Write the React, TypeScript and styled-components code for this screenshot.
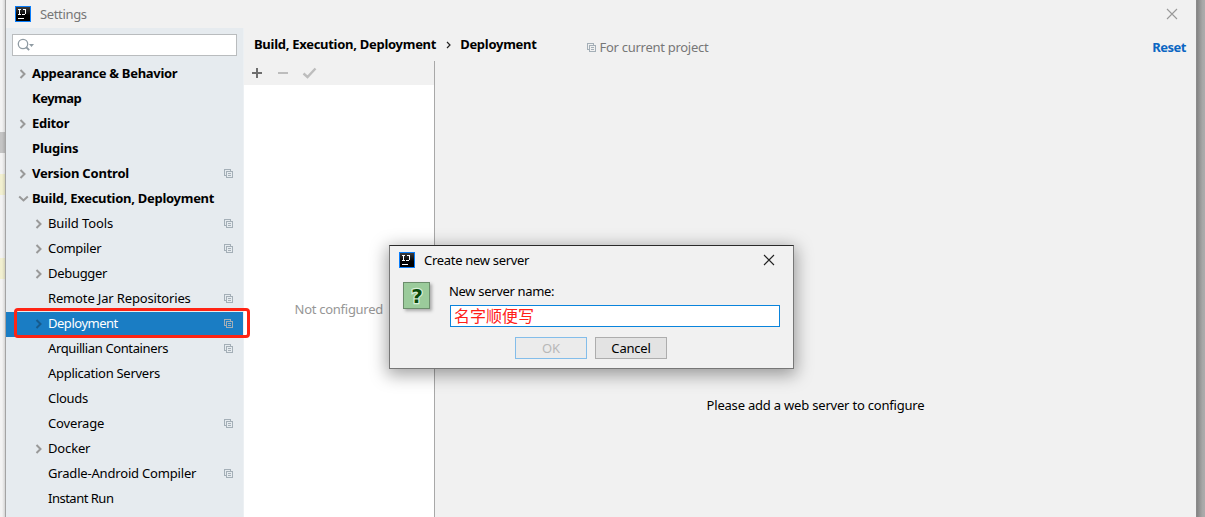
import React from 'react';
import styled, { createGlobalStyle } from 'styled-components';

const Global = createGlobalStyle`
  * { box-sizing: border-box; }
  body {
    margin: 0; overflow: hidden; color: #000;
    font: 13px/25px "Noto Sans", "Noto Sans CJK SC", sans-serif;
  }
`;

const Desktop = styled.div`
  height: 517px; display: grid; grid-template-columns: 5px 1192px 1fr;
  background: #f0f0f0; position: relative; overflow: hidden;
`;
const Backdrop = styled.div`
  display: flex; flex-direction: column;
  box-shadow: inset -4px 0 4px -3px #bbb;
`;
const Stripe = styled.div<{ $h: number; $color: string }>`
  height: ${p => p.$h}px; background: linear-gradient(90deg, transparent 40%, rgba(0,0,0,.12)), ${p => p.$color};
`;
const RightShadow = styled.div`background: linear-gradient(90deg, #848484, #a8a8a8 70%, #acacac);`;
const Window = styled.div`
  display: flex; flex-direction: column; background: #f1f1f1;
  border-left: 1px solid #a3a3a3; border-right: 1px solid #8a8a8a;
`;
const TitleBar = styled.header`
  height: 28px; display: flex; align-items: center; padding: 0 18px 0 9px; color: #777;
`;
const Label = styled.span<{ $ls?: number; $bold?: boolean }>`
  letter-spacing: ${p => p.$ls ?? 0}px; font-weight: ${p => (p.$bold ? 700 : 400)}; white-space: nowrap;
`;
const TitleText = styled(Label)`margin: 0 auto 0 9px;`;
const Columns = styled.div`flex: 1; display: flex; min-height: 0;`;
const Sidebar = styled.nav`
  width: 238px; background: #e6ebef; padding-top: 6px; border-right: 1px solid #ecf0f3;
`;
const Search = styled.div`
  width: 225px; height: 22px; margin: 0 0 6px 6px; border: 1px solid #b9bcbe; background: #fff;
  display: flex; align-items: center; padding-left: 4px;
`;
const Row = styled.div<{ $depth: number; $selected?: boolean }>`
  height: 25px; display: flex; align-items: center; padding: 0 10px 2px ${p => 10 + p.$depth * 16}px;
  background: ${p => (p.$selected ? '#1a7dc4' : 'transparent')};
  color: ${p => (p.$selected ? '#fff' : '#000')};
`;
const ArrowSlot = styled.span`width: 16px; height: 23px; display: flex; align-items: center;`;
const RowText = styled(Label)`margin-right: auto;`;
const Main = styled.main`flex: 1; display: flex; flex-direction: column; min-width: 0;`;
const Crumbs = styled.div`
  height: 33px; display: flex; align-items: center; padding: 0 10px; white-space: nowrap;
`;
const Chevron = styled.span`width: 24px; display: flex; justify-content: center;`;
const Scope = styled.div`
  display: flex; align-items: center; gap: 4px; color: #777; margin: 6px auto 0 50px;
`;
const Reset = styled(Label)`color: #0b66c3; margin-top: 6px;`;
const Panels = styled.div`flex: 1; display: flex; min-height: 0;`;
const ServerPane = styled.section`
  width: 191px; border-right: 1px solid #a8a8a8; display: flex; flex-direction: column;
`;
const Toolbar = styled.div`height: 24px; display: flex; align-items: center;`;
const ServerList = styled.div`
  flex: 1; background: #fff; color: #969696; text-align: right; padding: 212px 51px 0 0;
`;
const Details = styled.section`flex: 1; text-align: center; padding: 332px 0 0 0;`;

const Highlight = styled.div`
  position: absolute; left: 14px; top: 308px; width: 236px; height: 30px;
  border: 3px solid #ff2414; border-radius: 4px;
`;
const Dialog = styled.div`
  position: absolute; left: 389px; top: 245px; width: 405px; height: 124px;
  background: #f1f1f1; border: 1px solid #777; border-top-color: #2a2a2a;
  box-shadow: 0 4px 16px 2px rgba(0,0,0,.36);
`;
const DialogTitle = styled.div`
  height: 28px; display: flex; align-items: center; padding: 0 18px 0 9px;
`;
const DialogBody = styled.div`display: flex; padding: 8px 13px 0 13px;`;
const Question = styled.div`
  width: 27px; height: 27px; border: 1px solid #6c8d6c; background: #9bcb9b;
  box-shadow: 2px 2px 3px #aaa; display: flex; margin-right: 20px;
`;
const Form = styled.div`width: 330px; display: flex; flex-direction: column;`;
const FieldLabel = styled(Label)`line-height: 18px; height: 23px; margin-left: -1px;`;
const Field = styled.div`
  height: 22px; border: 1px solid #0a84dc; background: #fff; padding-left: 3px;
  color: #ff2019; font: 16px/18px "Noto Sans CJK SC", sans-serif;
`;
const Buttons = styled.div`display: flex; gap: 8px; margin: 10px 0 0 65px;`;
const Button = styled.div<{ $off?: boolean }>`
  width: 72px; height: 22px; line-height: 20px; text-align: center; letter-spacing: -.2px;
  border: 1px solid ${p => (p.$off ? '#83bdea' : '#adadad')};
  background: ${p => (p.$off ? '#ebebeb' : '#e3e3e3')}; color: ${p => (p.$off ? '#b8b8b8' : '#000')};
`;
const Mark = styled.text`
  font: 700 20px "DejaVu Sans", sans-serif; fill: #0a4a0a; stroke: #d9f0d9;
  stroke-width: 2.4px; paint-order: stroke; text-anchor: middle;
`;

const Logo = () => (
  <svg width="16" height="16" shapeRendering="crispEdges">
    <defs>
      <linearGradient id="tile" x2="0" y2="1"><stop stopColor="#3c3c3c" /><stop offset=".6" stopColor="#000" /></linearGradient>
    </defs>
    <rect width="16" height="16" fill="#087cfa" /><rect x="1" y="1" width="14" height="14" fill="url(#tile)" />
    <path d="M3 3.5h3M4.5 3v5M3 8.5h3M8 3.5h3M10.5 3v5M7 8.5h3" stroke="#fff" fill="none" />
    <path d="M3 12.5h6" stroke="#fff" />
  </svg>
);
const Close = ({ color }: { color: string }) => (
  <svg width="12" height="12"><path d="M1 1l10 10M11 1L1 11" stroke={color} strokeWidth="1.1" /></svg>
);
const Arrow = ({ open, color = '#999' }: { open?: boolean; color?: string }) => (
  <svg width="14" height="12" fill="none" stroke={color} strokeWidth="2">
    <path d={open ? 'M3.2 3.5l4.3 4 4.3-4' : 'M4.5 2l4 4-4 4'} />
  </svg>
);
const Copy = () => (
  <svg width="9" height="9" fill="none" stroke="#a4afb7" shapeRendering="crispEdges">
    <path d="M2 6.5H.5v-6h6V2M2.5 2.5h6v6h-6zM4 4.5h3M4 6.5h3" />
  </svg>
);

type Item = { text: string; depth?: number; arrow?: 'open' | 'closed'; copy?: boolean; selected?: boolean; ls?: number };
const items: Item[] = [
  { text: 'Appearance & Behavior', arrow: 'closed', ls: -0.3 },
  { text: 'Keymap', ls: -0.5 },
  { text: 'Editor', arrow: 'closed', ls: -0.3 },
  { text: 'Plugins', ls: -0.15 },
  { text: 'Version Control', arrow: 'closed', copy: true, ls: -0.22 },
  { text: 'Build, Execution, Deployment', arrow: 'open', ls: -0.28 },
  { text: 'Build Tools', depth: 1, arrow: 'closed', copy: true, ls: -0.1 },
  { text: 'Compiler', depth: 1, arrow: 'closed', copy: true, ls: -0.3 },
  { text: 'Debugger', depth: 1, arrow: 'closed', ls: -0.3 },
  { text: 'Remote Jar Repositories', depth: 1, copy: true, ls: -0.15 },
  { text: 'Deployment', depth: 1, arrow: 'closed', copy: true, selected: true, ls: -0.48 },
  { text: 'Arquillian Containers', depth: 1, copy: true, ls: -0.38 },
  { text: 'Application Servers', depth: 1, ls: -0.28 },
  { text: 'Clouds', depth: 1, ls: -0.3 },
  { text: 'Coverage', depth: 1, copy: true, ls: -0.15 },
  { text: 'Docker', depth: 1, arrow: 'closed', ls: -0.15 },
  { text: 'Gradle-Android Compiler', depth: 1, copy: true, ls: -0.18 },
  { text: 'Instant Run', depth: 1, ls: -0.5 },
];

export default function App() {
  return (
    <Desktop>
      <Global />
      <Backdrop>
        <Stripe $h={132} $color="#f3f3f3" /><Stripe $h={21} $color="#c4c4c4" />
        <Stripe $h={21} $color="#f3f3f3" /><Stripe $h={21} $color="#f2f0d0" />
        <Stripe $h={63} $color="#f3f3f3" /><Stripe $h={21} $color="#f2f0d0" />
        <Stripe $h={238} $color="#f3f3f3" />
      </Backdrop>
      <Window>
        <TitleBar><Logo /><TitleText $ls={-0.35}>Settings</TitleText><Close color="#999" /></TitleBar>
        <Columns>
          <Sidebar>
            <Search>
              <svg width="18" height="14" fill="none" stroke="#8f9ba3" strokeWidth="1.3">
                <circle cx="6" cy="6" r="4.7" /><path d="M9 9l3.2 3.2" strokeWidth="1.8" />
                <path d="M12 6h5l-2.5 3z" fill="#8f9ba3" stroke="none" />
              </svg>
            </Search>
            {items.map(i => (
              <Row key={i.text} $depth={i.depth ?? 0} $selected={i.selected}>
                <ArrowSlot>{i.arrow && <Arrow open={i.arrow === 'open'} color={i.selected ? '#165a8c' : '#999'} />}</ArrowSlot>
                <RowText $bold={!i.depth} $ls={i.ls}>{i.text}</RowText>
                {i.copy && <Copy />}
              </Row>
            ))}
          </Sidebar>
          <Main>
            <Crumbs>
              <Label $bold $ls={-0.28}>Build, Execution, Deployment</Label>
              <Chevron><svg width="5" height="8"><path d="M1 1l3 3-3 3" fill="none" stroke="#222" strokeWidth="1.2" /></svg></Chevron>
              <Label $bold $ls={-0.28}>Deployment</Label>
              <Scope><Copy /><Label $ls={-0.28}>For current project</Label></Scope>
              <Reset $bold $ls={-0.5}>Reset</Reset>
            </Crumbs>
            <Panels>
              <ServerPane>
                <Toolbar>
                  <svg width="80" height="24" fill="none" strokeWidth="2">
                    <path d="M8 12h10M13 7v10" stroke="#6e6e6e" /><path d="M34 12h10" stroke="#bdbdbd" />
                    <path d="M59.5 12.5l4 3.5 8-8.5" stroke="#bdbdbd" strokeWidth="2.4" />
                  </svg>
                </Toolbar>
                <ServerList><Label $ls={-0.27}>Not configured</Label></ServerList>
              </ServerPane>
              <Details><Label $ls={-0.2}>Please add a web server to configure</Label></Details>
            </Panels>
          </Main>
        </Columns>
      </Window>
      <RightShadow />
      <Highlight />
      <Dialog>
        <DialogTitle><Logo /><TitleText $ls={-0.3}>Create new server</TitleText><Close color="#222" /></DialogTitle>
        <DialogBody>
          <Question>
            <svg width="25" height="25"><Mark x="13" y="20">?</Mark></svg>
          </Question>
          <Form>
            <FieldLabel $ls={-0.33}>New server name:</FieldLabel>
            <Field>名字顺便写</Field>
            <Buttons><Button $off>OK</Button><Button>Cancel</Button></Buttons>
          </Form>
        </DialogBody>
      </Dialog>
    </Desktop>
  );
}
